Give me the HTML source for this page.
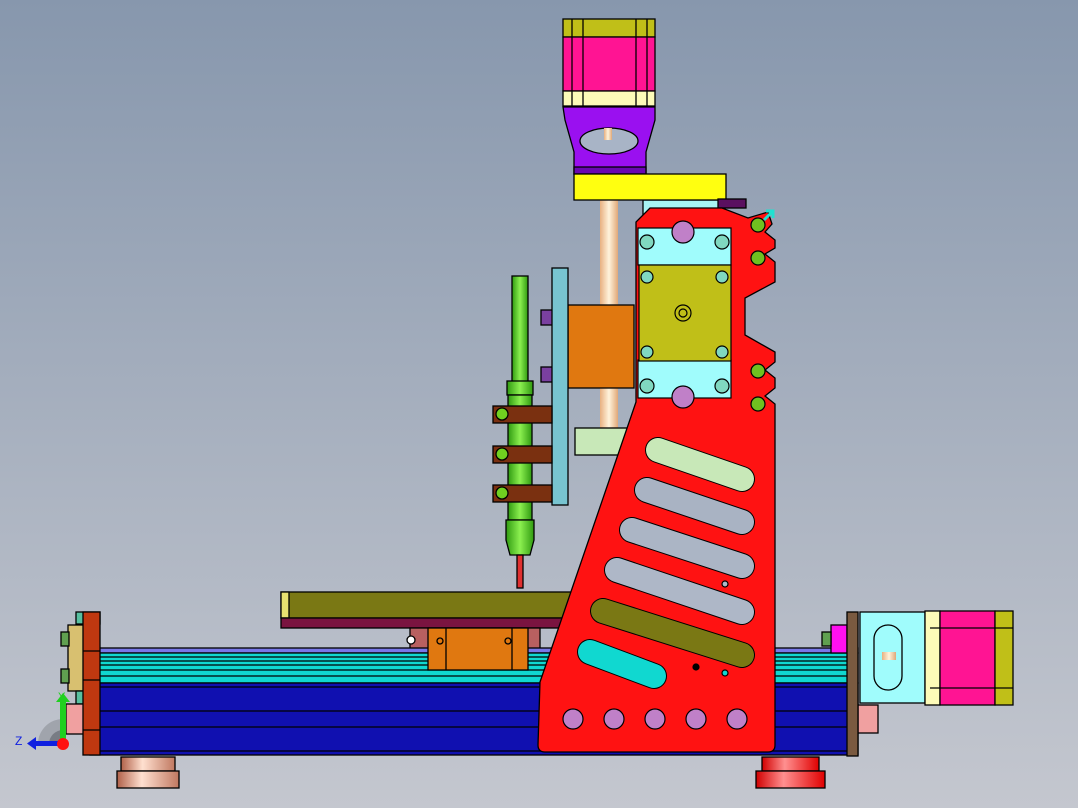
<!DOCTYPE html>
<html><head><meta charset="utf-8"><style>
html,body{margin:0;padding:0;width:1078px;height:808px;overflow:hidden}
svg{display:block}
text{font-family:"Liberation Sans",sans-serif}
</style></head><body>
<svg width="1078" height="808" viewBox="0 0 1078 808" xmlns="http://www.w3.org/2000/svg">
<defs>
<linearGradient id="bg" x1="0" y1="0" x2="0" y2="1"><stop offset="0" stop-color="#8797ad"/><stop offset="1" stop-color="#c4c7cf"/></linearGradient>
<linearGradient id="scr" x1="0" x2="1"><stop offset="0" stop-color="#e8b080"/><stop offset=".5" stop-color="#fff3dc"/><stop offset="1" stop-color="#e0a878"/></linearGradient>
<linearGradient id="grn" x1="0" x2="1"><stop offset="0" stop-color="#2f9a10"/><stop offset=".5" stop-color="#8cf050"/><stop offset="1" stop-color="#2f9a10"/></linearGradient>
<linearGradient id="foot" x1="0" x2="1"><stop offset="0" stop-color="#b06048"/><stop offset=".4" stop-color="#ffe0d0"/><stop offset="1" stop-color="#c07860"/></linearGradient>
<linearGradient id="footr" x1="0" x2="1"><stop offset="0" stop-color="#d00000"/><stop offset=".4" stop-color="#ff9090"/><stop offset="1" stop-color="#e00000"/></linearGradient>
</defs>
<rect width="1078" height="808" fill="url(#bg)"/>
<g stroke="#000" stroke-width="1.3">
<rect x="563" y="19" width="92" height="18" fill="#c0bf18"/>
<rect x="563" y="37" width="92" height="54" fill="#ff1493"/>
<rect x="563" y="91" width="92" height="15" fill="#fdfbb8"/>
<line x1="572" y1="19" x2="572" y2="106"/><line x1="583" y1="19" x2="583" y2="106"/>
<line x1="636" y1="19" x2="636" y2="106"/><line x1="647" y1="19" x2="647" y2="106"/>
<path d="M563,107 H655 V120 L646,152 V174 H574 V152 L565,120 Z" fill="#9a10f0"/>
<rect x="574" y="167" width="72" height="7" fill="#6a08b0"/>
<ellipse cx="609" cy="141" rx="29" ry="13" fill="#a8b4c6"/>
<rect x="604" y="128" width="8" height="12" fill="url(#scr)" stroke="none"/>
<rect x="600" y="200" width="18" height="232" fill="url(#scr)" stroke="none"/>
<rect x="643" y="200" width="82" height="30" fill="#a8f4f4"/>
<rect x="574" y="174" width="152" height="26" fill="#ffff10"/>
<rect x="718" y="199" width="28" height="9" fill="#5a1060"/>
<rect x="575" y="428" width="70" height="27" fill="#c8e8b8"/>
<rect x="281" y="592" width="391" height="26" fill="#7a7814"/>
<rect x="281" y="592" width="8" height="26" fill="#e8e070"/>
<rect x="281" y="618" width="391" height="10" fill="#7a1440"/>
<rect x="410" y="628" width="130" height="25" fill="#b86060"/>
<rect x="92" y="648" width="766" height="5" fill="#7878e8"/>
<rect x="94" y="653" width="764" height="30" fill="#10d8d0"/>
<line x1="94" y1="657" x2="858" y2="657"/><line x1="94" y1="661" x2="858" y2="661"/><line x1="94" y1="665" x2="858" y2="665"/><line x1="94" y1="670" x2="858" y2="670"/><line x1="94" y1="676" x2="858" y2="676"/>
<rect x="90" y="683" width="768" height="72" fill="#1010b0"/>
<line x1="90" y1="687" x2="858" y2="687"/><line x1="90" y1="711" x2="858" y2="711"/><line x1="90" y1="727" x2="858" y2="727"/><line x1="90" y1="751" x2="858" y2="751"/>
<rect x="428" y="628" width="100" height="42" fill="#e07810"/>
<line x1="446" y1="628" x2="446" y2="670"/><line x1="512" y1="628" x2="512" y2="670"/>
<circle cx="411" cy="640" r="4" fill="#fff"/>
<circle cx="440" cy="641" r="3" fill="none"/><circle cx="508" cy="641" r="3" fill="none"/>
<rect x="121" y="757" width="54" height="14" fill="url(#foot)"/>
<rect x="117" y="771" width="62" height="17" fill="url(#foot)"/>
<rect x="762" y="757" width="57" height="14" fill="url(#footr)"/>
<rect x="756" y="771" width="69" height="17" fill="url(#footr)"/>
</g>
<!-- axis gray quarter disc -->
<path d="M63,744 L38,744 A25,25 0 0 1 63,719 Z" fill="#a0a4ac"/>
<path d="M63,744 L49,744 A14,14 0 0 1 63,730 Z" fill="#787c84"/>
<g stroke="#000" stroke-width="1.3">
<rect x="76" y="612" width="24" height="12" fill="#58c0a0"/>
<rect x="68" y="625" width="16" height="66" fill="#d8c070"/>
<rect x="61" y="632" width="8" height="14" fill="#60a050"/><rect x="61" y="669" width="8" height="14" fill="#60a050"/>
<rect x="76" y="691" width="8" height="13" fill="#58c0a0"/>
<rect x="66" y="704" width="18" height="30" fill="#f0a0a0"/>
<rect x="83" y="612" width="17" height="143" fill="#c03810"/>
<line x1="83" y1="651" x2="100" y2="651"/><line x1="83" y1="680" x2="100" y2="680"/><line x1="83" y1="730" x2="100" y2="730"/>
<rect x="831" y="625" width="16" height="28" fill="#ff10f0"/>
<rect x="822" y="632" width="9" height="14" fill="#60a050"/>
<rect x="858" y="705" width="20" height="28" fill="#f0a0a0"/>
<rect x="847" y="612" width="11" height="144" fill="#7a5a40"/>
<rect x="860" y="612" width="65" height="91" fill="#a0fcfc"/>
<rect x="874" y="625" width="28" height="65" rx="14" fill="#a0fcfc"/>
<rect x="882" y="652" width="14" height="8" fill="url(#scr)" stroke="none"/>
<rect x="925" y="611" width="15" height="94" fill="#fdfbb8"/>
<rect x="940" y="611" width="55" height="94" fill="#ff1493"/>
<rect x="995" y="611" width="18" height="94" fill="#c0bf18"/>
<line x1="930" y1="628" x2="1013" y2="628"/><line x1="930" y1="688" x2="1013" y2="688"/>
<rect x="541" y="310" width="12" height="15" fill="#7a40a0"/><rect x="541" y="367" width="12" height="15" fill="#7a40a0"/>
<rect x="568" y="305" width="66" height="83" fill="#e07810"/>
<rect x="552" y="268" width="16" height="237" fill="#78c4d0"/>
<rect x="512" y="276" width="16" height="108" fill="url(#grn)"/>
<rect x="507" y="381" width="26" height="14" fill="url(#grn)"/>
<rect x="508" y="395" width="24" height="125" fill="url(#grn)"/>
<path d="M506,520 H534 V540 L530,555 H510 L506,540 Z" fill="url(#grn)"/>
<rect x="517" y="555" width="6" height="33" fill="#e03030"/>
<g fill="#7a3010">
<rect x="493" y="406" width="59" height="17"/><rect x="493" y="446" width="59" height="17"/><rect x="493" y="485" width="59" height="17"/>
</g>
<g fill="#70d020"><circle cx="502" cy="414" r="6"/><circle cx="502" cy="454" r="6"/><circle cx="502" cy="493" r="6"/></g>
<path d="M650,208 H722 L748,218 L768,212 L772,224 L765,232 L775,240 L775,248 L765,254 L775,262 L775,282 L745,298 V335 L775,352 V362 L765,370 L775,378 V388 L765,396 L775,404 V410 L775,745 Q775,752 768,752 H545 Q538,752 538,745 L540,682 L636,402 V222 Z" fill="#ff1212"/>
</g>
<g stroke-linecap="round" fill="none">
<g stroke="#000" stroke-width="26">
<path d="M658,450 L742,479"/><path d="M647,490 L742,522"/><path d="M632,530 L742,566"/><path d="M617,570 L742,612"/><path d="M603,611 L742,655"/><path d="M590,652 L654,676"/>
</g>
<g stroke-width="24">
<path d="M658,450 L742,479" stroke="#c8e8b8"/><path d="M647,490 L742,522" stroke="#a9b3c3"/><path d="M632,530 L742,566" stroke="#abb5c5"/><path d="M617,570 L742,612" stroke="#aeb7c7"/><path d="M603,611 L742,655" stroke="#7a7814"/><path d="M590,652 L654,676" stroke="#10d8d0"/>
</g>
</g>
<g stroke="#000" stroke-width="1.2">
<circle cx="725" cy="584" r="3" fill="#b0b8c8"/><circle cx="696" cy="667" r="3" fill="#000"/><circle cx="725" cy="673" r="3" fill="#10d8d0"/>
<rect x="638" y="228" width="93" height="37" fill="#a0fcfc"/>
<rect x="638" y="360" width="93" height="38" fill="#a0fcfc"/>
<rect x="639" y="265" width="92" height="96" fill="#c0bf18"/>
<circle cx="683" cy="313" r="8" fill="#c0bf18"/><circle cx="683" cy="313" r="4" fill="none"/>
<g fill="#c080c8"><circle cx="683" cy="232" r="11"/><circle cx="683" cy="397" r="11"/>
<circle cx="573" cy="719" r="10"/><circle cx="614" cy="719" r="10"/><circle cx="655" cy="719" r="10"/><circle cx="696" cy="719" r="10"/><circle cx="737" cy="719" r="10"/></g>
<g fill="#80d8c0"><circle cx="647" cy="242" r="7"/><circle cx="722" cy="242" r="7"/><circle cx="647" cy="386" r="7"/><circle cx="722" cy="386" r="7"/>
<circle cx="647" cy="277" r="6"/><circle cx="722" cy="277" r="6"/><circle cx="647" cy="352" r="6"/><circle cx="722" cy="352" r="6"/></g>
<g fill="#70c020"><circle cx="758" cy="225" r="7"/><circle cx="758" cy="258" r="7"/><circle cx="758" cy="371" r="7"/><circle cx="758" cy="404" r="7"/></g>
</g>
<path d="M764,220 L772,212 M766,211 H773 V218" stroke="#20e0d0" stroke-width="3" fill="none"/>
<rect x="60" y="700" width="6" height="40" fill="#20d020"/>
<path d="M56,702 L63,693 L70,702 Z" fill="#20d020"/>
<rect x="34" y="741" width="28" height="5" fill="#1020e0"/>
<path d="M36,737 L27,743.5 L36,750 Z" fill="#1020e0"/>
<circle cx="63" cy="744" r="6" fill="#ff1010"/>
<text x="58" y="700" font-size="11" fill="#20d020">Y</text>
<text x="15" y="745" font-size="12" fill="#1020e0">Z</text>
</svg>
</body></html>
